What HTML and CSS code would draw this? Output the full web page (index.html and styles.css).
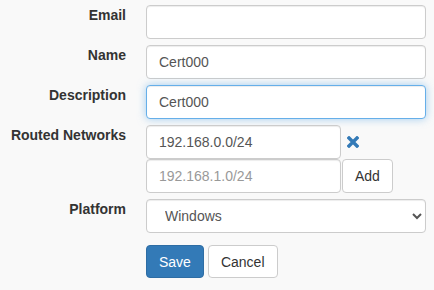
FILE: index.html
```html
<!DOCTYPE html>
<html lang="en">

<head>
    <meta charset="UTF-8">
    <meta name="viewport" content="width=device-width, initial-scale=1.0">
    <title>Certificate</title>
    <link rel="stylesheet" href="styles.css">
</head>

<body>
    <form class="cert-form">
        <div class="form-row">
            <label for="email">Email</label>
            <input type="text" id="email" class="form-control">
        </div>
        <div class="form-row">
            <label for="name">Name</label>
            <input type="text" id="name" class="form-control" value="Cert000">
        </div>
        <div class="form-row">
            <label for="description">Description</label>
            <input type="text" id="description" class="form-control focused" value="Cert000">
        </div>
        <div class="form-row">
            <label for="network-new">Routed Networks</label>
            <div class="network-list">
                <div class="network-line">
                    <input type="text" class="form-control network-input" value="192.168.0.0/24">
                    <span class="remove-icon">
                        <svg width="12" height="12" viewBox="0 0 12 12">
                            <path d="M2 2 L10 10 M10 2 L2 10" stroke="#337ab7" stroke-width="3.4" stroke-linecap="square"/>
                        </svg>
                    </span>
                </div>
                <div class="network-line">
                    <input type="text" id="network-new" class="form-control network-input" placeholder="192.168.1.0/24">
                    <button type="button" class="btn btn-default btn-add">Add</button>
                </div>
            </div>
        </div>
        <div class="form-row">
            <label for="platform">Platform</label>
            <select id="platform" class="form-control">
                <option>Windows</option>
                <option>Linux</option>
                <option>macOS</option>
            </select>
        </div>
        <div class="form-row actions">
            <span></span>
            <div class="buttons">
                <button type="submit" class="btn btn-primary">Save</button>
                <button type="button" class="btn btn-default">Cancel</button>
            </div>
        </div>
    </form>
</body>

</html>
```

FILE: styles.css
```css
body {
    margin: 0;
    background-color: #f9f9f9;
    font-family: "Liberation Sans", Arial, sans-serif;
    font-size: 14px;
    line-height: 20px;
    color: #333;
}

.cert-form {
    padding-top: 5px;
}

.form-row {
    display: grid;
    grid-template-columns: 126px 280px;
    column-gap: 20px;
    align-items: start;
    margin-bottom: 6px;
}

.form-row label {
    text-align: right;
    font-weight: bold;
    color: #333;
}

.form-row.actions {
    margin-top: 12px;
}

.form-control {
    box-sizing: border-box;
    width: 100%;
    height: 34px;
    padding: 6px 12px;
    font-family: inherit;
    font-size: 14px;
    line-height: 20px;
    color: #555;
    background-color: #fff;
    border: 1px solid #ccc;
    border-radius: 4px;
    box-shadow: inset 0 1px 1px rgba(0, 0, 0, 0.075);
    outline: none;
}

.form-control::placeholder {
    color: #999;
}

.form-control.focused {
    border-color: #66afe9;
    box-shadow: inset 0 1px 1px rgba(0, 0, 0, 0.075), 0 0 8px rgba(102, 175, 233, 0.6);
}

select.form-control {
    padding: 6px 8px 6px 14px;
}

.network-line {
    display: flex;
    align-items: center;
}

.network-input {
    width: 195px;
}

.remove-icon {
    display: flex;
    margin-left: 6px;
}

.btn {
    box-sizing: border-box;
    height: 33px;
    padding: 6px 12px;
    font-family: inherit;
    font-size: 14px;
    line-height: 20px;
    border: 1px solid transparent;
    border-radius: 4px;
    cursor: pointer;
}

.btn-default {
    color: #333;
    background-color: #fff;
    border-color: #ccc;
}

.btn-primary {
    color: #fff;
    background-color: #337ab7;
    border-color: #2e6da4;
}

.btn-add {
    height: 34px;
    margin-left: 1px;
}

.buttons {
    display: flex;
    gap: 4px;
}
```
